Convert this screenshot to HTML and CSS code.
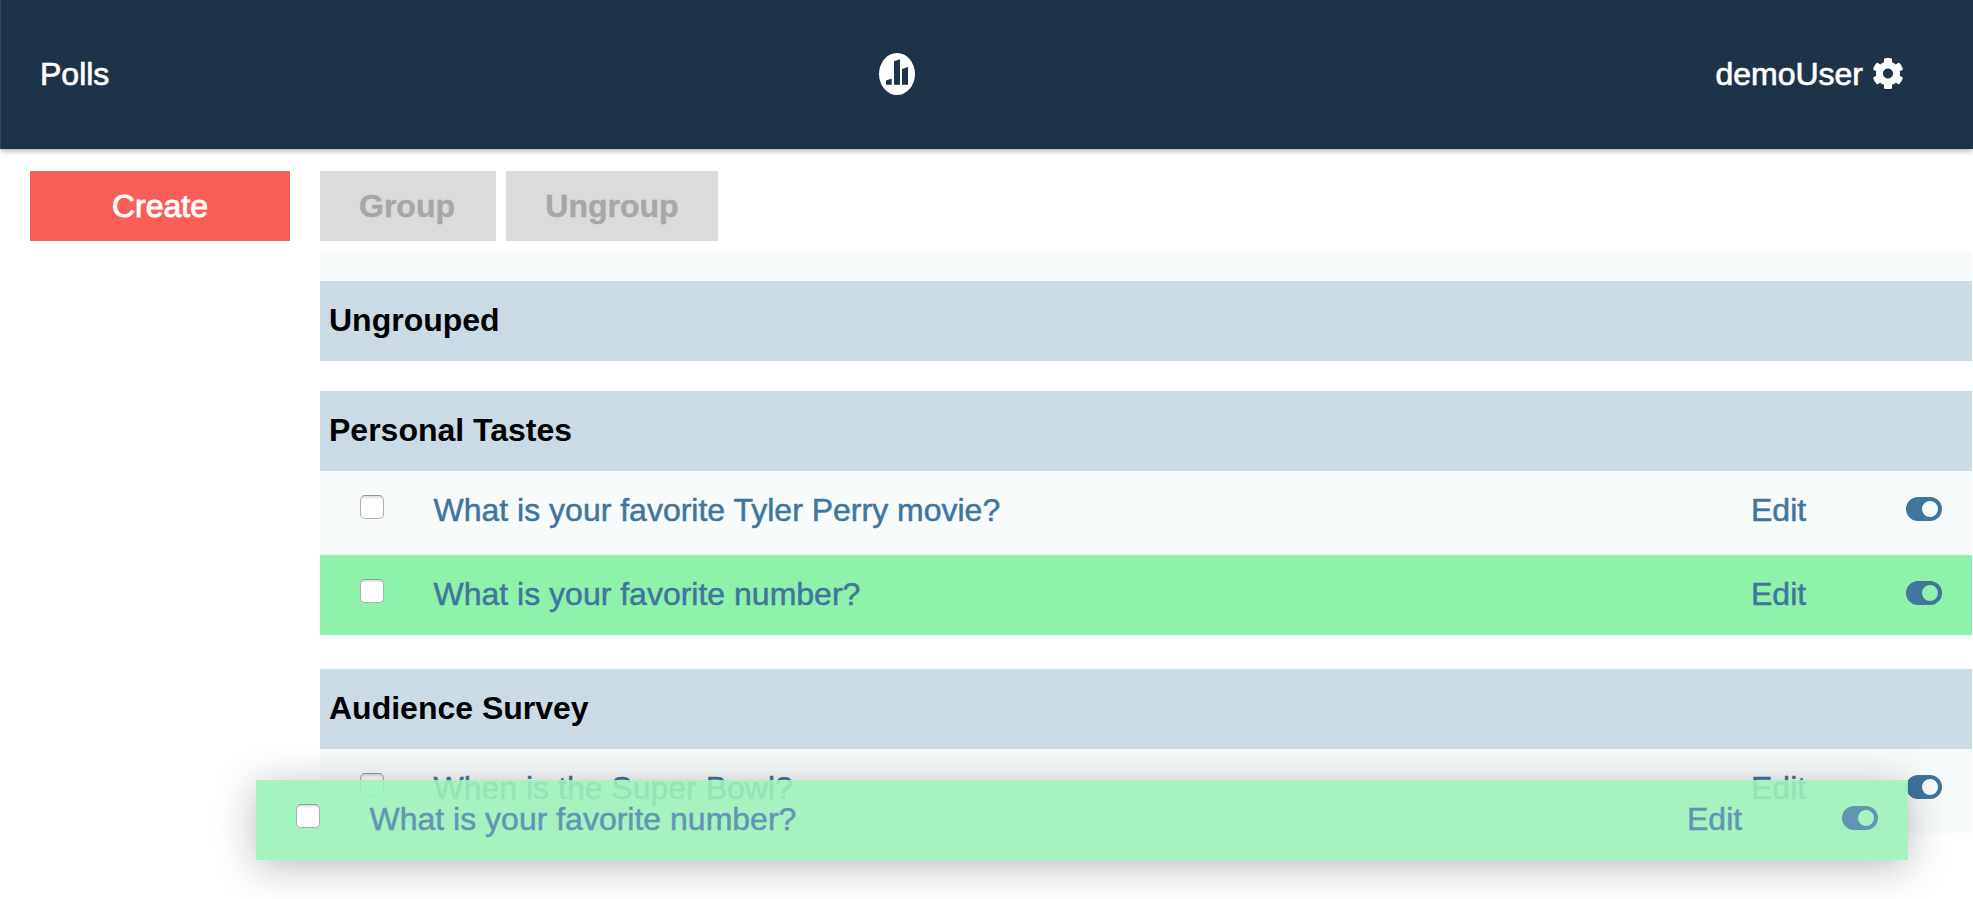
FILE: index.html
```html
<!DOCTYPE html>
<html lang="en">
<head>
<meta charset="utf-8">
<title>Polls</title>
<link rel="stylesheet" href="styles.css">
</head>
<body>
<svg class="sprite" aria-hidden="true">
  <symbol id="toggle" viewBox="0 0 36 24">
    <path fill-rule="evenodd" d="M12 0H24A12 12 0 0 1 24 24H12A12 12 0 0 1 12 0ZM24 4A8 8 0 1 0 24 20A8 8 0 1 0 24 4Z"/>
  </symbol>
</svg>
<header class="topbar">
  <a class="brand">Polls</a>
  <svg class="logo" viewBox="0 0 36 42"><ellipse cx="18" cy="21" rx="18" ry="21" fill="#fff"/><path fill="#1f3348" d="M7 27.400 12.700 25.600V31.800H7ZM15 8.200 21 6.300V31.800H15ZM23 16 29 14V31.800H23Z"/></svg>
  <a class="user">demoUser
    <svg class="gear" viewBox="0 0 512 512"><path fill="#fff" d="M487.400 315.700l-42.600-24.600c4.300-23.200 4.300-47 0-70.200l42.600-24.600c4.900-2.800 7.100-8.600 5.500-14-11.100-35.600-30-67.800-54.700-94.600-3.800-4.100-10-5.100-14.800-2.300L380.800 110c-17.900-15.400-38.500-27.300-60.800-35.100V25.800c0-5.600-3.900-10.500-9.400-11.700-36.700-8.200-74.300-7.800-109.200 0-5.500 1.200-9.400 6.100-9.400 11.700V75c-22.200 7.900-42.800 19.800-60.800 35.100L88.700 85.500c-4.900-2.800-11-1.900-14.800 2.300-24.700 26.700-43.600 58.900-54.700 94.600-1.700 5.400.6 11.200 5.500 14L67.300 221c-4.300 23.200-4.300 47 0 70.200l-42.600 24.600c-4.900 2.800-7.100 8.600-5.500 14 11.100 35.600 30 67.800 54.700 94.600 3.800 4.100 10 5.100 14.800 2.300l42.600-24.600c17.900 15.400 38.500 27.300 60.800 35.100v49.200c0 5.600 3.900 10.500 9.400 11.700 36.700 8.200 74.300 7.800 109.200 0 5.500-1.200 9.400-6.100 9.400-11.700v-49.200c22.200-7.900 42.800-19.800 60.800-35.100l42.600 24.600c4.900 2.800 11 1.900 14.800-2.300 24.700-26.700 43.600-58.900 54.700-94.600 1.500-5.500-.7-11.300-5.600-14.100zM256 336c-44.100 0-80-35.900-80-80s35.900-80 80-80 80 35.900 80 80-35.900 80-80 80z"/></svg>
  </a>
</header>
<div class="layout">
  <aside class="sidebar"><button class="btn create">Create</button></aside>
  <main class="content">
    <div class="actions"><button class="btn off group-btn">Group</button><button class="btn off ungroup-btn">Ungroup</button></div>
    <div class="strip"></div>
    <section class="group"><h2>Ungrouped</h2></section>
    <section class="group">
      <h2>Personal Tastes</h2>
      <div class="item"><div class="row"><input type="checkbox" class="check"><a class="title">What is your favorite Tyler Perry movie?</a><a class="edit">Edit</a><svg class="toggle"><use href="#toggle"/></svg></div></div>
      <div class="item"><div class="row picked"><input type="checkbox" class="check"><a class="title">What is your favorite number?</a><a class="edit">Edit</a><svg class="toggle"><use href="#toggle"/></svg></div></div>
    </section>
    <section class="group">
      <h2>Audience Survey</h2>
      <div class="item"><div class="row"><input type="checkbox" class="check"><a class="title">When is the Super Bowl?</a><a class="edit">Edit</a><svg class="toggle"><use href="#toggle"/></svg></div></div>
    </section>
  </main>
</div>
<div class="row dragged"><input type="checkbox" class="check"><a class="title">What is your favorite number?</a><a class="edit">Edit</a><svg class="toggle"><use href="#toggle"/></svg></div>
</body>
</html>
```
FILE: styles.css
```css
* { box-sizing: border-box; }
body {
  margin: 0;
  height: 899px;
  overflow: hidden;
  background: #fff;
  font: 32px "Liberation Sans", Arial, sans-serif;
}
.sprite { display: none; }
.topbar {
  display: grid;
  grid-template-columns: 839px 36px 1fr;
  align-items: center;
  height: 149px;
  padding: 0 69px 0 39px;
  border-left: 1px solid #34475b;
  background: #1f3348;
  color: #fff;
  box-shadow: 0 1px 6px rgba(0, 0, 0, .4);
  -webkit-text-stroke: .7px;
}
.logo { width: 36px; height: 42px; margin-top: -1px; }
.user { display: flex; justify-content: flex-end; align-items: center; gap: 9px; }
.gear { width: 32px; height: 33px; margin-top: -3px; }
.layout { display: flex; padding: 22px 1px 0 30px; gap: 30px; }
.sidebar { flex: 0 0 260px; }
.content { flex: 1; }
.btn {
  display: block;
  height: 70px;
  padding: 0;
  border: 0;
  font: inherit;
  line-height: 70px;
}
.create { width: 260px; background: #f95f56; color: #fff; -webkit-text-stroke: .9px; }
.actions { display: flex; gap: 10px; margin-bottom: 10px; }
.off { background: #dbdbdb; color: #a6a6a6; font-weight: bold; -webkit-text-stroke: .4px; }
.group-btn { width: 176px; padding-right: 2px; }
.ungroup-btn { width: 212px; }
.strip { height: 30px; background: #f7fbfc; }
.group { margin-bottom: 30px; }
h2 {
  margin: 0;
  padding-left: 9px;
  height: 80px;
  background: #cbdbe5;
  font-size: 32px;
  line-height: 78px;
}
.item { height: 84px; background: #f7fbfc; }
.row {
  display: flex;
  height: 80px;
  padding: 0 30px 0 40px;
  line-height: 78px;
  color: #40759d;
  -webkit-text-stroke: .5px;
}
.picked { background: #8ef2aa; }
.check {
  appearance: none;
  width: 24px;
  height: 24px;
  margin: 24px 49.5px 0 0;
  border: 1px solid #b0b0b0;
  border-top-color: #949494;
  border-radius: 5px;
  background: #fff;
  box-shadow: inset 0 2px 2px rgba(0, 0, 0, .12);
}
.title { flex: 1; }
.edit { width: 155px; }
.toggle { width: 36px; height: 24px; margin-top: 26px; fill: #40759d; }
.dragged {
  position: absolute;
  left: 256px;
  top: 780px;
  width: 1652px;
  background: rgba(155, 242, 186, .9);
  color: #6195b4;
  box-shadow: 0 6px 40px rgba(0, 0, 0, .28);
}
.dragged .toggle { fill: #6195b4; }
```
